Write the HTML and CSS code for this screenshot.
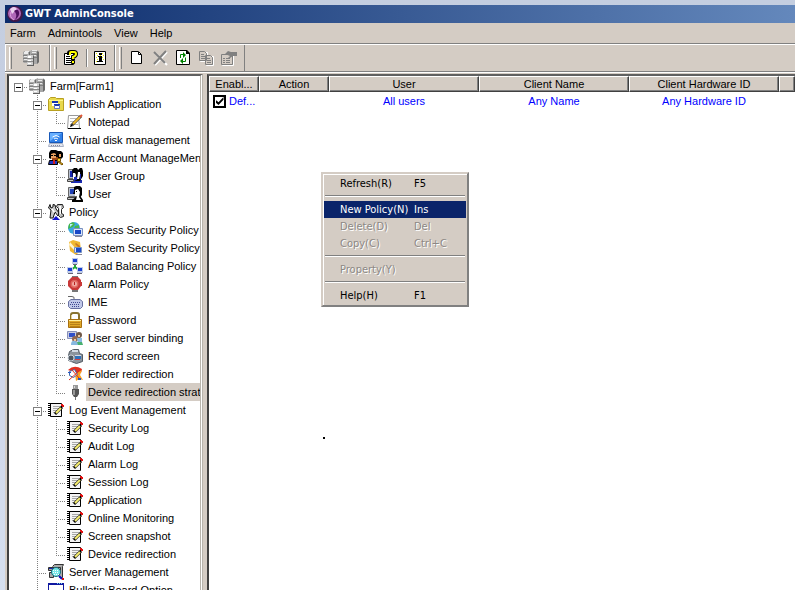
FILE: index.html
```html
<!DOCTYPE html>
<html lang="en">
<head>
<meta charset="utf-8">
<title>GWT AdminConsole</title>
<link rel="stylesheet" href="styles.css">
</head>
<body>
<svg class="sprite" aria-hidden="true">
  <symbol id="servers" viewBox="0 0 16 16">
    <path fill="#a8a8a8" d="M0 2l2-1h5v12H1l-1-1zM7 1l2-1h5l2 2v10l-2 2H9l-2-1z"/>
    <path fill="#6c6c6c" d="M6 2h1v11H6zM14 1l2 1v10l-2 2z"/>
    <path fill="#ececec" d="M1 2h4v2H1zM1 6h4v1H1zM1 9h4v1H1zM9 2h4v1H9zM9 5h4v1H9zM2 1h4v1H2zM9 0h5v1H9z"/>
    <path fill="#808080" d="M0 5h6v1H0zM0 8h6v1H0zM0 11h5v1H0zM8 4h6v1H8zM10 7h4v1h-4z"/>
    <path fill="#cfcfcf" d="M4 6l1-1h5l1 1v9l-1 1H5l-1-1z"/><path fill="#606060" d="M10 5l1 1v9l-1 1zM4 15h7v1H4z"/>
    <path fill="#888" d="M4 8h6v1H4zM4 11h6v1H4z"/><path fill="#fff" d="M5 6h3v2H5zM5 10h3v1H5zM5 13h3v1H5z"/>
  </symbol>
  <symbol id="publish" viewBox="0 0 16 16">
    <path fill="#e8d84c" stroke="#b8a020" d="M.5 3.500V14.500h15v-12h-7l-1-1h-5z"/><path fill="#fff68a" d="M1 4h14v1H1z"/>
    <path fill="#fff" d="M4 5h6v5H4zM6 8h6v4H6z"/><path fill="#1838b0" d="M4 5h6v2H4zM6 8h6v2H6z"/><path fill="none" stroke="#6878b8" d="M6.500 9v3.500h5V9"/>
  </symbol>
  <symbol id="notepad" viewBox="0 0 16 16">
    <path fill="#fff" stroke="#999" d="M1.500 1.500h10l1 13h-12z"/><path stroke="#bbb" d="M3 4.500h6M3 7.500h5M3 10.500h8"/>
    <path stroke="#333" stroke-width="3" d="M5 11L14 2"/><path stroke="#f0b828" stroke-width="2" d="M6 10L13 3"/><path stroke="#e05838" stroke-width="2" d="M13 3l2-2"/><path d="M3 13l1-3 2 2zM1 14h13v1H1z"/>
  </symbol>
  <symbol id="laptop" viewBox="0 0 16 16">
    <path fill="#3080e8" stroke="#1858b8" d="M1.500.5h13v10h-13z"/><path fill="#68b0ff" d="M2 1h12L2 9z"/>
    <path fill="none" stroke="#fff" d="M4.500 5q3.500-3 7 0M6 7q2-2 4 0"/><path fill="#fff" d="M7 8h2v1H7z"/><path fill="#e4e6ee" stroke="#a8b0c4" d="M1.500 11.500h13l1 3H.5z"/><path stroke="#889" stroke-dasharray="1" d="M3 13.500h10"/>
  </symbol>
  <symbol id="account" viewBox="0 0 16 16">
    <path d="M2 1l1-1h5l2 1h3l2 2v4l-2 2H3L1 8V3z"/><path fill="#e8a060" d="M3 4l3-1 2 1v5H3zM11 4h2v3h-2z"/><path fill="#a04818" d="M4 8h4v2H4zM8 7h2v3H8z"/>
    <path fill="#2038c0" stroke="#000" d="M1.500 10.500h8v4h-9z"/><path fill="#d02020" d="M5 10h2v4H5z"/><path fill="#f8d020" stroke="#7a5000" d="M9.500 8.500h3v3h-3zM12 12l3 2-1 1-4-3z"/><path d="M3 5h2v1H3zM6 5h2v1H6z"/>
  </symbol>
  <symbol id="user" viewBox="0 0 16 16">
    <path fill="#b8c0d0" stroke="#666" d="M1.500 1.500h9v9h-9z"/><path fill="#2040b8" d="M3 3h5v5H3z"/><path fill="#c8c8c8" stroke="#444" d="M.5 11.500h10v2H.5z"/>
    <path d="M7 1l2-1h4l2 2v7l-2 3h-2L8 8H6l1-3zM5 14l4-3h5l2 3v2H5z"/><path fill="#fff" d="M8 4l3-1 2 3-1 5 2 3H9l1-4H8z"/><path d="M9 5h1v1H9z"/>
  </symbol>
  <symbol id="group" viewBox="0 0 16 16">
    <path fill="#b8c0d0" stroke="#666" d="M1.500 1.500h9v9h-9z"/><path fill="#1828b0" d="M3 3h6v6H3zM4 12h11v3H4z"/><path fill="#c8c8c8" stroke="#444" d="M.5 11.500h6v2H.5z"/>
    <path d="M5 2l2-2h3l1 2 2-2h2l1 3v5l-3 5H9L6 11z"/><path fill="#fff" d="M6 5h2l1 2-1 4H6zM11 4h2v3l-1 4h-2z"/><path fill="#1828b0" d="M7 9h3v3H7zM13 6h1v5h-1z"/>
  </symbol>
  <symbol id="policy" viewBox="0 0 16 16">
    <path fill="#c8c8c8" stroke="#111" d="M2 .5L.5 4 3 6 2 14h3l2-6 3 4 2-2-4-5-1-4-2-.5L5 3 3 4z"/><path fill="#bbb" stroke="#222" d="M9.500.5h5l1 3-2 2v4l2 1v2l-3 1-2-2v-7l-2-2z"/>
    <path fill="#fff" d="M11 2h2v8h-1zM3 5h2l2 3-1 1z"/><path fill="#1010d0" d="M4 16l4-4 4 4z"/>
  </symbol>
  <symbol id="globe" viewBox="0 0 16 16">
    <circle cx="7" cy="6" r="6" fill="#38a8e0"/><path fill="#48b848" d="M2 2l4-2 2 2-2 3-3 1-2 1zM8 4l4-1v5l-3 2-2-3z"/><path fill="#b8f0ff" d="M3 2h3L3 5z"/>
    <path fill="#d8e4f8" stroke="#7890c0" d="M6.500 6.500h9v7h-9z"/><path fill="#1848c8" d="M8 8h6v4H8z"/><path fill="#889" d="M8 14h7v1H8z"/>
  </symbol>
  <symbol id="system" viewBox="0 0 16 16">
    <path fill="#f0b830" d="M2 2l4-2 7 2 1 8-5 5-6-4z"/><path fill="#fff4d0" d="M3 2l7 8-1 2-7-7z"/><path fill="#c87820" d="M9 3l4 3v3l-5-5z"/>
    <path fill="#d8e4f8" stroke="#7890c0" d="M7.500 7.500h7v5h-7z"/><path fill="#1848c8" d="M9 8h5v4H9z"/><path fill="#889" d="M9 14h6v1H9z"/>
  </symbol>
  <symbol id="balance" viewBox="0 0 16 16">
    <path stroke="#20a838" stroke-width="2" fill="none" d="M8 5v4L4 12M8 9l4 3"/><path fill="#c0cce8" d="M5 0h6v6H5zM0 9h6v6H0zM10 9h6v6h-6z"/><path fill="#1840d0" d="M6 1h4v3H6zM1 10h4v3H1zM11 10h4v3h-4z"/><path fill="#667" d="M6 6h4v1H6zM1 15h5v1H1zM10 15h5v1h-5z"/>
  </symbol>
  <symbol id="alarm" viewBox="0 0 16 16">
    <path fill="#777" d="M5 0h6v3H5zM5 14h6v2H5z"/><path fill="#c83838" d="M5 1h6l3 3v2h1v4h-1l-3 4H5l-4-4V5z"/><circle cx="7.500" cy="8" r="4" fill="#e06860"/><circle cx="7.500" cy="8" r="2.500" fill="#f0a8a0"/><path fill="#b82020" d="M7 6h1v3H7z"/>
  </symbol>
  <symbol id="ime" viewBox="0 0 16 16">
    <path fill="none" stroke="#666" d="M1 2.500h4q3 0 2 3"/><path fill="#c0c8e8" stroke="#6870a0" d="M1.500 7.500L4 5.500h9l2.500 2v5l-2 2h-10l-2-2z"/><path stroke="#404890" stroke-dasharray="1" d="M4 8.500h9M3 10.500h10M5 12.500h7"/>
  </symbol>
  <symbol id="lock" viewBox="0 0 16 16">
    <path fill="none" stroke="#8a7430" stroke-width="2" d="M4 8V3q0-2 2-2h4q2 0 2 2v5"/><path stroke="#e8d898" fill="none" d="M4.500 8V3"/><path fill="#e0a828" stroke="#a87010" d="M1.500 7.500h13v8h-13z"/><path fill="#fff0a0" d="M2 8h12v1H2z"/><path stroke="#b88018" d="M3 10.500h10M3 12.500h10M3 14.500h10"/>
  </symbol>
  <symbol id="binding" viewBox="0 0 16 16">
    <path fill="#c8cce0" stroke="#8890b8" d="M.5 1.500h9v7h-9z"/><path fill="#3050c8" d="M2 3h6v4H2z"/><circle cx="12" cy="5" r="3" fill="#705848"/><circle cx="8" cy="9" r="3" fill="#906850"/><path fill="#88b8e0" d="M4 15q0-5 4-4t3 4zM10 8h5v5h-4z"/><path fill="#48b070" d="M10 12h5l1 3h-5z"/><path fill="#f0c8a0" d="M11 5h2v2h-2zM7 9h2v2H7z"/>
  </symbol>
  <symbol id="camera" viewBox="0 0 16 16">
    <path fill="#8c949c" stroke="#545c64" d="M2.500 3.500l4-2h5l1 4 3 1v7l-6 2-8-3v-5z"/><circle cx="4" cy="10" r="3" fill="#505860" stroke="#c8d0d8"/><path fill="#d4dce4" d="M5 2h6v2H5zM8 7h6v1H8z"/><path fill="#3070b8" d="M8 8h6v3H8z"/><path fill="#d84040" d="M8 11h5v1H8z"/>
  </symbol>
  <symbol id="redirect" viewBox="0 0 16 16">
    <path fill="#e03020" d="M1 4q6-6 14-1l-1 4H9z"/><path fill="#f8a020" d="M8 8l7-4-2 5 3 5-4-1-3 2z"/><path fill="#fff" stroke="#3868b0" d="M2.500 5.500l5-2 3 5-4 3-4-2z"/><path stroke="#e03020" d="M2 14l10-9M5 4l7 8"/><path fill="#2858c0" d="M1 6h3v1H1zM11 12h3v2h-3z"/>
  </symbol>
  <symbol id="usb" viewBox="0 0 16 16">
    <path fill="#999" d="M6 1h5v4H6z"/><path fill="#d8d8d8" d="M7 2h1v2H7z"/><path fill="#555" d="M5 5h7v5l-2 3H7l-2-3z"/><path fill="#999" d="M6 6h2v5H6z"/><path fill="#777" d="M8 13h1v3H8z"/>
  </symbol>
  <symbol id="log" viewBox="0 0 16 16">
    <path fill="#f4f4f4" stroke="#000" d="M2.500 1.500h11v13h-11z"/><path stroke="#000" stroke-width="3" stroke-dasharray="1" d="M1.500 1v14"/><path stroke="#a8a8a8" d="M5 4.500h7M5 6.500h6M5 8.500h5M5 10.500h3"/>
    <path stroke="#000" stroke-width="3" d="M7 12l7-7"/><path stroke="#f8f070" stroke-width="2" d="M8 11l5-5"/><path fill="#e01010" d="M13 2h2v1h1v2h-2V4h-1z"/>
  </symbol>
  <symbol id="server" viewBox="0 0 16 16">
    <path fill="#aaa" stroke="#333" d="M4.500 2.500l2-2h9l-1 2v11h-3M.5 3.500h12v3H.5zM1.500 8.500h4v5h-4z"/><path fill="#1828b0" d="M1 4h8v1H1z"/><circle cx="8" cy="8" r="4.500" fill="#78e8e8" stroke="#186878"/><path stroke="#fff" stroke-dasharray="1" d="M5 6.500h6M5 8.500h6M6 10.500h5"/><path stroke="#1010c0" stroke-width="2" d="M11 12l3 3"/><path fill="#e01010" d="M14 14h2v2h-2z"/>
  </symbol>
  <symbol id="board" viewBox="0 0 16 16">
    <path fill="#fff" stroke="#1018a0" d="M.5 1.500h15v13H.5z"/><path fill="#1018a0" d="M0 1h16v2H0z"/><path fill="#70d0f0" d="M9 1h1v1H9zM11 1h1v1h-1zM13 1h1v1h-1z"/>
  </symbol>
</svg>

<div class="window">
  <header class="titlebar">
    <svg class="app-icon" viewBox="0 0 16 16"><circle cx="8" cy="8" r="8" fill="#401848"/><circle cx="7.500" cy="7.500" r="6.500" fill="#b068b8"/><path fill="#ead0ee" d="M3 3q4-4 7 0L5 8z"/><path fill="#501060" d="M7 5q4-3 5 1t-4 8q3-6-1-9z"/><path fill="none" stroke="#e0a0e0" d="M4 6q-2 5 3 8"/></svg>
    <h1>GWT AdminConsole</h1>
  </header>
  <nav class="menubar">
    <button>Farm</button><button>Admintools</button><button>View</button><button>Help</button>
  </nav>
  <div class="toolbar">
    <div class="band">
      <button class="wide" aria-label="Farm"><svg><use href="#servers"/></svg></button>
    </div>
    <div class="band">
      <button aria-label="Help topics"><svg viewBox="0 0 16 16"><path fill="#fff" stroke="#000" d="M1.500 3.500h9v11h-9z"/><path stroke="#000" d="M3 6.500h4M3 8.500h5M3 10.500h5M3 12.500h5"/><path fill="none" stroke="#000" stroke-width="4" d="M6 5V3q0-1 2-1h3q2 0 2 2t-3 3v3"/><path fill="none" stroke="#ff0" stroke-width="2" d="M7 5V3q0-1 1-1h3q2 0 2 2t-3 3v2"/><path stroke="#000" fill="#ff0" d="M8.500 10.500h3v3h-3z"/></svg></button>
      <span class="divider"></span>
      <button aria-label="About"><svg viewBox="0 0 16 16"><path fill="#fff" stroke="#000" d="M2.500 1.500h11v13h-11z"/><path stroke="#f4f000" stroke-dasharray="1 2" d="M4 3.500h9M5 5.500h8M4 7.500h9M5 9.500h8M4 11.500h9"/><path d="M7 3h3v2H7zM6 6h4v5h1v1H5v-1h2V7H6z"/></svg></button>
    </div>
    <div class="band actions">
      <button aria-label="New"><svg viewBox="0 0 16 16"><path fill="#fff" stroke="#000" d="M2.500 1.500h7l3 3v9h-10z"/><path fill="none" stroke="#000" d="M9.500 2v2.500H12"/></svg></button>
      <button aria-label="Delete" disabled><svg viewBox="0 0 16 16"><path fill="none" stroke="#fff" stroke-width="2" d="M3 3l12 12M15 2L3 15"/><path fill="none" stroke="#808080" stroke-width="2" d="M2 2l11 11M14 1L2 14"/></svg></button>
      <button aria-label="Refresh"><svg viewBox="0 0 16 16"><path fill="#fff" stroke="#000" d="M1.500.5h10l3 3v11h-13z"/><path d="M11 0v4h4V3l-3-3z"/><path fill="none" stroke="#008000" d="M5.500 8V4.500H8M10.500 7.500v4H8"/><path fill="#008000" d="M8 2l3 3-3 3zM8 8v6l-3-3z"/></svg></button>
      <button aria-label="Copy" disabled><svg viewBox="0 0 16 16"><path fill="none" stroke="#fff" d="M2.500 2.500h7v9h-7zM8.500 6.500h7v9h-7z"/><path fill="#d4ccc4" stroke="#808080" d="M1.500 1.500h5l2 2v7h-7zM7.500 5.500h5l2 2v7h-7z"/><path stroke="#808080" d="M3 4.500h3M3 6.500h4M3 8.500h4M9 8.500h3M9 10.500h4M9 12.500h4"/></svg></button>
      <button aria-label="Properties" disabled><svg viewBox="0 0 16 16"><path fill="none" stroke="#fff" d="M1.500 5.500h11v10h-11z"/><path fill="#d4ccc4" stroke="#808080" d="M.5 4.500h11v10H.5z"/><path stroke="#808080" d="M2 8.500h2M5 8.500h4M2 10.500h2M5 10.500h4M2 12.500h2M5 12.500h4"/><path fill="#808080" d="M4 4l3-3 3 1h6v4h-4l-3 2H7l2-2z"/></svg></button>
    </div>
  </div>

  <main class="panes">
    <aside class="tree">
      <ul>
        <li class="root"><div class="row"><button class="toggle" aria-label="Collapse"></button><svg><use href="#servers"/></svg><span>Farm[Farm1]</span></div>
          <ul>
            <li><div class="row"><button class="toggle" aria-label="Collapse"></button><svg><use href="#publish"/></svg><span>Publish Application</span></div>
              <ul><li><div class="row"><svg><use href="#notepad"/></svg><span>Notepad</span></div></li></ul>
            </li>
            <li><div class="row"><svg><use href="#laptop"/></svg><span>Virtual disk management</span></div></li>
            <li><div class="row"><button class="toggle" aria-label="Collapse"></button><svg><use href="#account"/></svg><span>Farm Account ManageMent</span></div>
              <ul>
                <li><div class="row"><svg><use href="#group"/></svg><span>User Group</span></div></li>
                <li><div class="row"><svg><use href="#user"/></svg><span>User</span></div></li>
              </ul>
            </li>
            <li><div class="row"><button class="toggle" aria-label="Collapse"></button><svg><use href="#policy"/></svg><span>Policy</span></div>
              <ul>
                <li><div class="row"><svg><use href="#globe"/></svg><span>Access Security Policy</span></div></li>
                <li><div class="row"><svg><use href="#system"/></svg><span>System Security Policy</span></div></li>
                <li><div class="row"><svg><use href="#balance"/></svg><span>Load Balancing Policy</span></div></li>
                <li><div class="row"><svg><use href="#alarm"/></svg><span>Alarm Policy</span></div></li>
                <li><div class="row"><svg><use href="#ime"/></svg><span>IME</span></div></li>
                <li><div class="row"><svg><use href="#lock"/></svg><span>Password</span></div></li>
                <li><div class="row"><svg><use href="#binding"/></svg><span>User server binding</span></div></li>
                <li><div class="row"><svg><use href="#camera"/></svg><span>Record screen</span></div></li>
                <li><div class="row"><svg><use href="#redirect"/></svg><span>Folder redirection</span></div></li>
                <li><div class="row selected"><svg><use href="#usb"/></svg><span>Device redirection strategy</span></div></li>
              </ul>
            </li>
            <li><div class="row"><button class="toggle" aria-label="Collapse"></button><svg><use href="#log"/></svg><span>Log Event Management</span></div>
              <ul>
                <li><div class="row"><svg><use href="#log"/></svg><span>Security Log</span></div></li>
                <li><div class="row"><svg><use href="#log"/></svg><span>Audit Log</span></div></li>
                <li><div class="row"><svg><use href="#log"/></svg><span>Alarm Log</span></div></li>
                <li><div class="row"><svg><use href="#log"/></svg><span>Session Log</span></div></li>
                <li><div class="row"><svg><use href="#log"/></svg><span>Application</span></div></li>
                <li><div class="row"><svg><use href="#log"/></svg><span>Online Monitoring</span></div></li>
                <li><div class="row"><svg><use href="#log"/></svg><span>Screen snapshot</span></div></li>
                <li><div class="row"><svg><use href="#log"/></svg><span>Device redirection</span></div></li>
              </ul>
            </li>
            <li><div class="row"><svg><use href="#server"/></svg><span>Server Management</span></div></li>
            <li><div class="row"><svg><use href="#board"/></svg><span>Bulletin Board Option</span></div></li>
          </ul>
        </li>
      </ul>
    </aside>
    <section class="list">
      <table>
        <colgroup><col class="c-enable"><col class="c-action"><col class="c-wide"><col class="c-wide"><col class="c-wide"><col></colgroup>
        <thead><tr><th>Enabl...</th><th>Action</th><th>User</th><th>Client Name</th><th>Client Hardware ID</th><th></th></tr></thead>
        <tbody><tr><td><label><input type="checkbox" checked>Def...</label></td><td></td><td>All users</td><td>Any Name</td><td>Any Hardware ID</td><td></td></tr></tbody>
      </table>
    </section>
  </main>
</div>

<div class="context-menu" role="menu">
  <button role="menuitem"><span>Refresh(R)</span><span>F5</span></button>
  <hr>
  <button role="menuitem" class="active"><span>New Policy(N)</span><span>Ins</span></button>
  <button role="menuitem" disabled><span>Delete(D)</span><span>Del</span></button>
  <button role="menuitem" disabled><span>Copy(C)</span><span>Ctrl+C</span></button>
  <hr>
  <button role="menuitem" disabled><span>Property(Y)</span></button>
  <hr>
  <button role="menuitem"><span>Help(H)</span><span>F1</span></button>
</div>
<i class="pointer"></i>
</body>
</html>
```
FILE: styles.css
```css
:root {
  --face: #d4ccc4;
  --shadow: #808080;
  --dark: #404040;
  --ui: "DejaVu Sans Condensed", "DejaVu Sans", sans-serif;
}
*, *::before { box-sizing: border-box; }
body {
  margin: 0;
  height: 100vh;
  overflow: hidden;
  padding: 5px 0 0 5px;
  background: linear-gradient(#c4cee0, #ccd2e6 50%, #d6e0f0);
  font: 11px/18px "Liberation Sans", sans-serif;
  color: #000;
}
button {
  flex: none;
  margin: 0;
  padding: 0;
  border: 0;
  background: none;
  color: inherit;
  font: inherit;
}
svg { display: block; flex: none; width: 16px; height: 16px; }
.sprite { position: absolute; width: 0; height: 0; }

.window { display: flex; flex-direction: column; height: 100%; background: var(--face); }
.titlebar {
  display: flex;
  align-items: center;
  gap: 2px;
  height: 18px;
  padding-left: 2px;
  background: linear-gradient(90deg, #0c2c6c, #6488bc);
  color: #fff;
}
.titlebar h1 { margin: 0; font: bold 11px/18px var(--ui); }
.menubar {
  display: flex;
  gap: 12px;
  height: 21px;
  padding-left: 5px;
  border-bottom: 1px solid var(--shadow);
  font-size: 11px;
  line-height: 20px;
}
.toolbar {
  display: flex;
  height: 28px;
  border-top: 1px solid #fff;
  border-bottom: 1px solid var(--shadow);
}
.band {
  display: flex;
  align-items: center;
  padding: 0 5px 0 3px;
  border-left: 1px solid #fff;
  border-right: 1px solid var(--shadow);
}
.band::before {
  content: "";
  align-self: stretch;
  width: 3px;
  margin: 2px 6px 2px 0;
  border-left: 1px solid #fff;
  border-right: 1px solid var(--shadow);
}
.band button { padding: 0 1px 0 0; }
.band .wide { padding: 0 5px; }
.divider { width: 2px; height: 18px; margin: 0 4px 0 6px; border-left: 1px solid var(--shadow); border-right: 1px solid #fff; }
.actions { padding-right: 0; }
.actions::before { margin-right: 7px; }
.actions button { padding: 0 7px 0 0; }

.panes {
  display: flex;
  flex: 1;
  min-height: 0;
  gap: 4px;
  padding-left: 2px;
  border-top: 1px solid #fff;
}
.tree, .list {
  margin-top: 1px;
  overflow: hidden;
  background: #fff;
  border-style: solid;
  border-width: 2px 0 0 2px;
  border-color: var(--dark);
  border-top-color: #606060;
}
.tree { flex: none; width: 196px; padding: 1px 0 0 1px; border-right: 3px double #b8b4ac; white-space: nowrap; }
.tree ul { margin: 0; padding: 0; list-style: none; }
.tree ul ul { padding-left: 19px; }
.tree li {
  background:
    repeating-linear-gradient(#808080 0 1px, transparent 1px 2px) 8px 0 / 1px 100% no-repeat,
    repeating-linear-gradient(90deg, #808080 0 1px, transparent 1px 2px) 8px 10px / 10px 1px no-repeat;
}
.tree li:last-child { background-size: 1px 11px, 10px 1px; }
.tree .root:last-child { background-size: 0 0, 10px 1px; }
.row { display: flex; align-items: center; height: 18px; padding-left: 19px; }
.row span { padding: 0 2px; margin-left: 3px; }
.row .toggle + svg { margin-left: 6px; }
.row:has(.toggle) { padding-left: 4px; }
.toggle {
  width: 9px;
  height: 9px;
  margin-top: 3px;
  border: 1px solid var(--shadow);
  background: linear-gradient(#000, #000) center / 5px 1px no-repeat #fff;
}
.selected span { background: var(--face); }

.list { flex: 1; min-width: 0; }
table { width: 100%; table-layout: fixed; border-collapse: separate; border-spacing: 0; }
.c-enable { width: 50px; }
.c-action { width: 70px; }
.c-wide { width: 150px; }
th {
  height: 16px;
  padding: 0;
  border: 1px solid;
  border-color: #fff var(--dark) var(--dark) #fff;
  box-shadow: inset -1px -1px var(--shadow);
  background: var(--face);
  font-weight: normal;
  line-height: 14px;
}
td { padding: 0; color: #00f; text-align: center; }
td label { display: flex; align-items: center; gap: 3px; padding-left: 4px; }
input {
  appearance: none;
  flex: none;
  width: 13px;
  height: 13px;
  margin: 0;
  border: 2px solid #000;
  background: #fff;
  display: grid;
  place-items: center;
}
input:checked::before {
  content: "";
  width: 8px;
  height: 8px;
  background: #000;
  clip-path: polygon(0 35%, 38% 65%, 100% 0, 100% 35%, 38% 100%, 0 68%);
}

.context-menu {
  position: absolute;
  left: 321px;
  top: 172px;
  width: 148px;
  padding: 1px;
  border: 2px solid;
  border-color: var(--face) var(--shadow) var(--shadow) var(--face);
  box-shadow: inset 1px 1px #fff;
  background: var(--face);
  font: 11px/17px var(--ui);
}
.context-menu button { display: flex; width: 100%; height: 17px; padding-left: 16px; text-align: left; }
.context-menu span:first-child { width: 74px; }
.context-menu button:disabled { color: #8c8884; text-shadow: 1px 1px #fff; }
.context-menu .active { background: #0a246a; color: #fff; }
.context-menu hr { height: 2px; margin: 3px 1px 4px; border: 0; border-top: 1px solid var(--shadow); border-bottom: 1px solid #fff; }
.pointer { position: absolute; left: 323px; top: 437px; width: 2px; height: 2px; background: #000; }
```
